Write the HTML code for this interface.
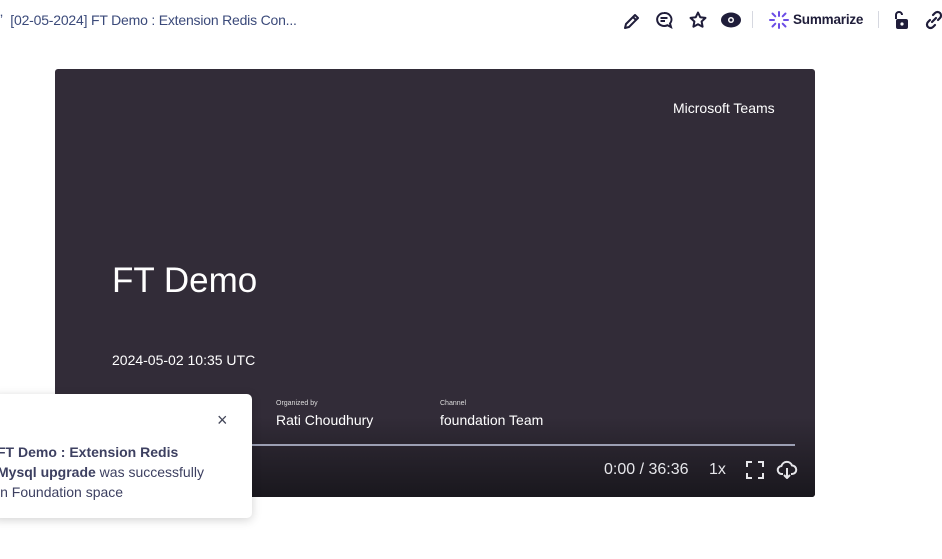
<!DOCTYPE html>
<html><head><meta charset="utf-8"><style>
*{margin:0;padding:0;box-sizing:border-box}
body{width:942px;height:559px;overflow:hidden;background:#fff;font-family:"Liberation Sans",sans-serif;position:relative}
.t{position:absolute;white-space:nowrap}
</style></head><body>
<div class="t" style="left:0;top:12px;font-size:14px;color:#3b4a7a;letter-spacing:-0.2px">ʼ&nbsp; [02-05-2024] FT Demo : Extension Redis Con...</div>
<svg class="t" style="left:622px;top:11px" width="20" height="20" viewBox="0 0 20 20" fill="none" stroke="#1f1d3a" stroke-width="2" stroke-linejoin="round"><path d="M3 17l1-4L13 4l3 3-9 9z M11 6l3 3"/></svg>
<svg class="t" style="left:654px;top:10px" width="20" height="20" viewBox="0 0 20 20" fill="none" stroke="#1f1d3a" stroke-width="2"><path d="M10 3a7 6.5 0 1 0 3.5 12.2L17 17l-1-3.5A7 6.5 0 0 0 10 3z"/><path d="M6.5 8h7M6.5 11h4.5"/></svg>
<svg class="t" style="left:688px;top:10px" width="20" height="20" viewBox="0 0 20 20" fill="none" stroke="#1f1d3a" stroke-width="2" stroke-linejoin="round"><path d="M10 2.5l2.3 4.8 5.2.6-3.9 3.6 1 5.2L10 14.2l-4.6 2.5 1-5.2L2.5 7.9l5.2-.6z"/></svg>
<svg class="t" style="left:720px;top:10px" width="22" height="20" viewBox="0 0 22 20"><ellipse cx="11" cy="10" rx="10" ry="7.5" fill="#1f1d3a"/><circle cx="11" cy="10" r="3" fill="#fff"/><circle cx="11" cy="10" r="1.5" fill="#1f1d3a"/></svg>
<div class="t" style="left:752px;top:11px;width:1px;height:17px;background:#d6d8e0"></div>
<svg class="t" style="left:769px;top:11px" width="20" height="18" viewBox="0 0 20 18" stroke="#6b4de6" stroke-width="2" stroke-linecap="round"><path d="M10 1v4M10 13v4M1 9h4M15 9h4M3.5 2.5l2.8 2.8M13.7 12.7l2.8 2.8M16.5 2.5l-2.8 2.8M6.3 12.7l-2.8 2.8"/></svg>
<div class="t" style="left:793px;top:12px;font-size:13.5px;font-weight:bold;color:#1f1d3a;letter-spacing:-0.2px">Summarize</div>
<div class="t" style="left:878px;top:11px;width:1px;height:17px;background:#d6d8e0"></div>
<svg class="t" style="left:893px;top:10px" width="18" height="20" viewBox="0 0 18 20"><path d="M3 9V5a3 3 0 0 1 6 0" fill="none" stroke="#1f1d3a" stroke-width="2"/><rect x="3" y="9" width="12" height="10" rx="2" fill="#1f1d3a"/><circle cx="9" cy="14" r="1.6" fill="#fff"/></svg>
<svg class="t" style="left:924px;top:10px" width="20" height="20" viewBox="0 0 20 20" fill="none" stroke="#1f1d3a" stroke-width="2.2" stroke-linecap="round"><path d="M8 12l4-4M9 5l2-2a3.5 3.5 0 0 1 5 5l-2 2M11 15l-2 2a3.5 3.5 0 0 1-5-5l2-2"/></svg>

<div class="t" style="left:55px;top:69px;width:760px;height:428px;background:#322c38;border-radius:3px;overflow:hidden">
  <div class="t" style="left:0;right:0;bottom:0;height:80px;background:linear-gradient(#322c38,#19171d)"></div>
  <div class="t" style="left:618px;top:31px;font-size:14px;color:#fff">Microsoft Teams</div>
  <div class="t" style="left:57px;top:192px;font-size:35px;color:#fff">FT Demo</div>
  <div class="t" style="left:57px;top:283px;font-size:14px;color:#fff">2024-05-02 10:35 UTC</div>
  <div class="t" style="left:221px;top:331px;font-size:7px;color:#ddd">Organized by</div>
  <div class="t" style="left:221px;top:343px;font-size:14px;color:#fff">Rati Choudhury</div>
  <div class="t" style="left:385px;top:331px;font-size:7px;color:#ddd">Channel</div>
  <div class="t" style="left:385px;top:343px;font-size:14px;color:#fff">foundation Team</div>
  <div class="t" style="left:0;top:375px;width:740px;height:2px;background:#9b9fb3"></div>
  <div class="t" style="left:549px;top:392px;font-size:16px;color:#e6e6ea">0:00 / 36:36</div>
  <div class="t" style="left:654px;top:392px;font-size:16px;color:#e6e6ea">1x</div>
  <svg class="t" style="left:691px;top:392px" width="18" height="18" viewBox="0 0 18 18" fill="none" stroke="#e6e6ea" stroke-width="2"><path d="M1 6V1h5M12 1h5v5M17 12v5h-5M6 17H1v-5"/></svg>
  <svg class="t" style="left:721px;top:390px" width="22" height="22" viewBox="0 0 22 22" fill="none" stroke="#e6e6ea" stroke-width="2" stroke-linejoin="round"><path d="M7 15H6a4 4 0 0 1-.5-8A5.5 5.5 0 0 1 16 6.5a4 4 0 0 1 0 8.5h-1"/><path d="M11 9v10M8 16l3 3 3-3"/></svg>
</div>

<div class="t" style="left:-8px;top:394px;width:260px;height:124px;background:#fff;border-radius:5px;box-shadow:0 2px 10px rgba(0,0,0,0.18)">
  <div class="t" style="left:225px;top:16px;font-size:18px;color:#44475a">×</div>
  <div class="t" style="left:5px;top:48px;font-size:14px;line-height:20px;color:#3d4061"><b>FT Demo : Extension Redis</b><br><b>Mysql upgrade</b> was successfully<br>in Foundation space</div>
</div>
</body></html>
